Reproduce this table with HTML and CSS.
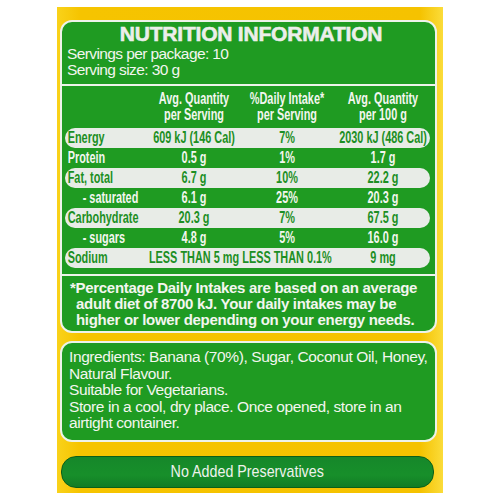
FILE: index.html
```html
<!DOCTYPE html>
<html lang="en">
<head>
  <meta charset="UTF-8" />
  <meta name="viewport" content="width=device-width, initial-scale=1.0"/>
  <title>Nutrition Information</title>
  <link rel="stylesheet" href="styles.css">
</head>
<body>

<div class="pack">
  <section class="panel">
    <header class="panel-head">
      <h1>NUTRITION INFORMATION</h1>
      <p>Servings per package: 10</p>
      <p>Serving size: 30 g</p>
    </header>

    <div class="facts">
      <div class="row row-head">
        <span></span>
        <span><span class="two">Avg. Quantity<br>per Serving</span></span>
        <span><span class="two">%Daily Intake*<br>per Serving</span></span>
        <span><span class="two">Avg. Quantity<br>per 100 g</span></span>
      </div>
      <div class="row pill">
        <span class="name">Energy</span>
        <span>609 kJ (146 Cal)</span>
        <span>7%</span>
        <span>2030 kJ (486 Cal)</span>
      </div>
      <div class="row">
        <span class="name">Protein</span>
        <span>0.5 g</span>
        <span>1%</span>
        <span>1.7 g</span>
      </div>
      <div class="row pill">
        <span class="name">Fat, total</span>
        <span>6.7 g</span>
        <span>10%</span>
        <span>22.2 g</span>
      </div>
      <div class="row">
        <span class="name sub">- saturated</span>
        <span>6.1 g</span>
        <span>25%</span>
        <span>20.3 g</span>
      </div>
      <div class="row pill">
        <span class="name">Carbohydrate</span>
        <span>20.3 g</span>
        <span>7%</span>
        <span>67.5 g</span>
      </div>
      <div class="row">
        <span class="name sub">- sugars</span>
        <span>4.8 g</span>
        <span>5%</span>
        <span>16.0 g</span>
      </div>
      <div class="row pill">
        <span class="name">Sodium</span>
        <span>LESS THAN 5 mg</span>
        <span>LESS THAN 0.1%</span>
        <span>9 mg</span>
      </div>
    </div>

    <p class="note">*Percentage Daily Intakes are based on an average<br>adult diet of 8700 kJ. Your daily intakes may be<br>higher or lower depending on your energy needs.</p>
  </section>

  <section class="ingredients">
    <p>Ingredients: Banana (70%), Sugar, Coconut Oil, Honey,<br>Natural Flavour.</p>
    <p>Suitable for Vegetarians.</p>
    <p>Store in a cool, dry place. Once opened, store in an<br>airtight container.</p>
  </section>

  <div class="badge"><span>No Added Preservatives</span></div>
</div>

</body>
</html>
```

FILE: styles.css
```css
body {
  margin: 0;
  padding: 0;
  background: #ffffff;
  font-family: 'Liberation Sans', Arial, sans-serif;
}

.pack {
  width: 386px;
  height: 486px;
  margin: 7px auto 0 auto;
  padding: 13px 6px 0 3px;
  box-sizing: border-box;
  background: linear-gradient(90deg, #f9d21a 0%, #f6c400 6%, #f5c200 94%, #fbdc3a 100%);
  display: flex;
  flex-direction: column;
}

.panel {
  background: #1f9b22;
  border: 2px solid #eef3ea;
  border-radius: 12px;
  color: #f3f6ef;
}

.panel-head {
  border-bottom: 2px solid #eef3ea;
  padding: 0 0 6px 5px;
}

.panel-head h1 {
  margin: 0;
  font-size: 21px;
  line-height: 24px;
  font-weight: 900;
  text-align: center;
  letter-spacing: -0.2px;
  color: #eceeea;
  -webkit-text-stroke: 0.6px #eceeea;
}

.panel-head p {
  margin: 0;
  font-size: 15.5px;
  line-height: 16px;
  letter-spacing: -0.6px;
}

/* nutrition table, condensed bold */
.facts {
  border-bottom: 2px solid #eef3ea;
  padding: 0 5px 6px 3px;
  font-weight: bold;
  font-size: 16px;
}

.row {
  display: grid;
  grid-template-columns: 85px 88px 98px minmax(0, 1fr);
  align-items: center;
  height: 20px;
  white-space: nowrap;
}

.row > span {
  display: flex;
  justify-content: center;
  min-width: 0;
  transform: scaleX(0.68);
}

.row-head {
  height: auto;
  padding: 5px 0;
  line-height: 16px;
}

.row-head .two {
  text-align: center;
}

.row.pill {
  background: #e8ece7;
  color: #1c8f24;
  border-radius: 10px;
}

.row > .name {
  justify-content: flex-start;
  transform-origin: left center;
  padding-left: 4px;
}

.row > .name.sub {
  padding-left: 26px;
}

.note {
  margin: 0;
  padding: 4px 0 3px 14px;
  text-indent: -6px;
  font-weight: bold;
  font-size: 15px;
  line-height: 16px;
  letter-spacing: -0.3px;
}

.ingredients {
  margin-top: 8px;
  background: #1f9b22;
  border: 2px solid #eef3ea;
  border-radius: 12px;
  color: #f3f6ef;
  height: 101px;
  box-sizing: border-box;
  padding: 6px 0 0 7px;
  font-size: 15.5px;
  line-height: 16.5px;
  letter-spacing: -0.4px;
}

.ingredients p {
  margin: 0;
}

.badge {
  margin: 14px 3px 0 1px;
  height: 30px;
  border: 1px solid #0b5f18;
  border-radius: 15px;
  background: linear-gradient(180deg, #16872a 0%, #178f2a 60%, #127c24 100%);
  color: #eef2ec;
  display: flex;
  align-items: center;
  justify-content: center;
  font-size: 17px;
}

.badge span {
  display: inline-block;
  transform: scaleX(0.84);
}
```
